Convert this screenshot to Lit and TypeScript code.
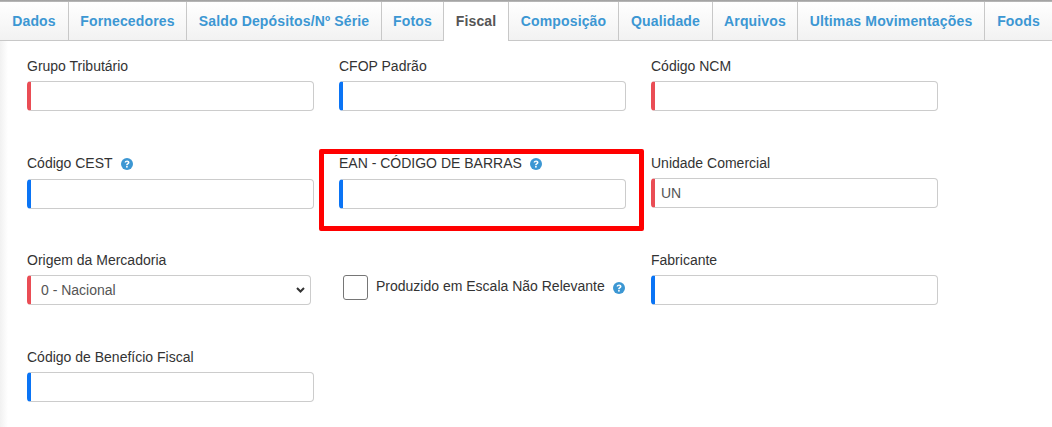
import { LitElement, html, css, nothing } from 'lit';
import { customElement } from 'lit/decorators.js';

const tabs = [
	{ label: 'Dados', width: 69 },
	{ label: 'Fornecedores', width: 118 },
	{ label: 'Saldo Depósitos/Nº Série', width: 195 },
	{ label: 'Fotos', width: 62 },
	{ label: 'Fiscal', width: 66 },
	{ label: 'Composição', width: 110 },
	{ label: 'Qualidade', width: 94 },
	{ label: 'Arquivos', width: 85 },
	{ label: 'Ultimas Movimentações', width: 187 },
	{ label: 'Foods', width: 67 },
];

const help = html`<svg class="help" viewBox="0 0 12 12" width="12" height="12" aria-hidden="true">
	<circle cx="6" cy="6" r="6" fill="#3c97d3"></circle>
	<path d="M3.6 4.6C3.7 3.2 4.7 2.4 6.1 2.4c1.4 0 2.4.8 2.4 2 0 .9-.6 1.4-1.2 1.8-.5.3-.6.5-.6 1.1H5.1c0-1 .3-1.5 1-1.9.5-.3.7-.5.7-.9 0-.4-.3-.7-.8-.7-.5 0-.8.3-.9.8z" fill="#fff"></path>
	<rect x="5.1" y="8" width="1.6" height="1.6" fill="#fff"></rect>
</svg>`;

const chevron = "url(\"data:image/svg+xml,%3Csvg xmlns='http://www.w3.org/2000/svg' width='9' height='6'%3E%3Cpath d='M1 1l3.5 3.5L8 1' fill='none' stroke='%23333' stroke-width='2'/%3E%3C/svg%3E\")";

@customElement('app-root')
export class AppRoot extends LitElement {
	static styles = css`
		:host {
			display: block;
			height: 427px;
			overflow: hidden;
			position: relative;
			background: linear-gradient(90deg, #f1f1f1 0, #fff 8px);
			font-family: "Liberation Sans", Arial, sans-serif;
			color: #333;
		}
		.topline {
			height: 2px;
			background: linear-gradient(#9c9c9c, #bdbdbd);
		}
		.tabs {
			display: flex;
			height: 39px;
			box-sizing: border-box;
			border-bottom: 1px solid #c8c8c8;
			background: linear-gradient(#fff, #f2f2f2);
		}
		.tab {
			box-sizing: border-box;
			height: 38px;
			line-height: 38px;
			text-align: center;
			font-size: 14px;
			font-weight: bold;
			letter-spacing: 0.15px;
			color: #3c97d3;
			border-right: 1px solid #c8c8c8;
			white-space: nowrap;
		}
		.tab.active {
			color: #555;
			height: 39px;
			background: #fff;
			border-left: 1px solid #c8c8c8;
			margin-left: -1px;
		}
		.tab:last-child {
			border-right: none;
		}
		.form {
			display: grid;
			grid-template-columns: repeat(3, 287px);
			grid-auto-rows: 97px;
			column-gap: 25px;
			padding: 17px 0 0 27px;
		}
		.field {
			display: flex;
			flex-direction: column;
		}
		label {
			display: flex;
			align-items: center;
			height: 16px;
			margin-bottom: 7px;
			font-size: 14px;
			line-height: 16px;
		}
		.help {
			margin-left: 8px;
			flex: none;
		}
		label .help {
			margin-top: 2px;
		}
		.box {
			box-sizing: border-box;
			height: 30px;
			padding-left: 6px;
			border: 1px solid #ccc;
			border-radius: 4px;
			background: #fff;
			font: 14px "Liberation Sans", Arial, sans-serif;
			color: #555;
			outline: none;
		}
		.red { border-left: 4px solid #ea4d55; }
		.blue { border-left: 4px solid #0a74f5; }
		.low { margin-top: 1px; }
		select.box {
			width: 284px;
			padding-left: 10px;
			appearance: none;
			background-repeat: no-repeat;
			background-position: right 5px center;
		}
		.check {
			display: flex;
			align-items: center;
			font-size: 14px;
			padding: 23px 0 0 4px;
			height: 25px;
		}
		.check .text {
			padding-bottom: 3px;
		}
		.tick {
			box-sizing: border-box;
			width: 25px;
			height: 25px;
			margin-right: 8px;
			border: 1px solid #767676;
			border-radius: 3px;
			background: #fff;
		}
		.mark {
			position: absolute;
			left: 319px;
			top: 149px;
			width: 325px;
			height: 82px;
			box-sizing: border-box;
			border: 5px solid #f00;
			border-radius: 2px;
		}
	`;

	field(name: string, color: string, opts: { help?: boolean; value?: string; low?: boolean } = {}) {
		return html`<div class="field">
			<label>${name}${opts.help ? help : nothing}</label>
			<input class="box ${color} ${opts.low ? 'low' : ''}" .value=${opts.value ?? ''} />
		</div>`;
	}

	render() {
		return html`
			<div class="topline"></div>
			<div class="tabs">
				${tabs.map((t) => html`<div class="tab ${t.label === 'Fiscal' ? 'active' : ''}" style="width: ${t.width}px">${t.label}</div>`)}
			</div>
			<div class="form">
				${this.field('Grupo Tributário', 'red')}
				${this.field('CFOP Padrão', 'blue')}
				${this.field('Código NCM', 'red')}
				${this.field('Código CEST', 'blue', { help: true, low: true })}
				${this.field('EAN - CÓDIGO DE BARRAS', 'blue', { help: true, low: true })}
				${this.field('Unidade Comercial', 'red', { value: 'UN' })}
				<div class="field">
					<label>Origem da Mercadoria</label>
					<select class="box red" style="background-image: ${chevron}"><option>0 - Nacional</option></select>
				</div>
				<div class="check">
					<span class="tick"></span><span class="text">Produzido em Escala Não Relevante</span>${help}
				</div>
				${this.field('Fabricante', 'blue')}
				${this.field('Código de Benefício Fiscal', 'blue')}
			</div>
			<div class="mark"></div>
		`;
	}
}
